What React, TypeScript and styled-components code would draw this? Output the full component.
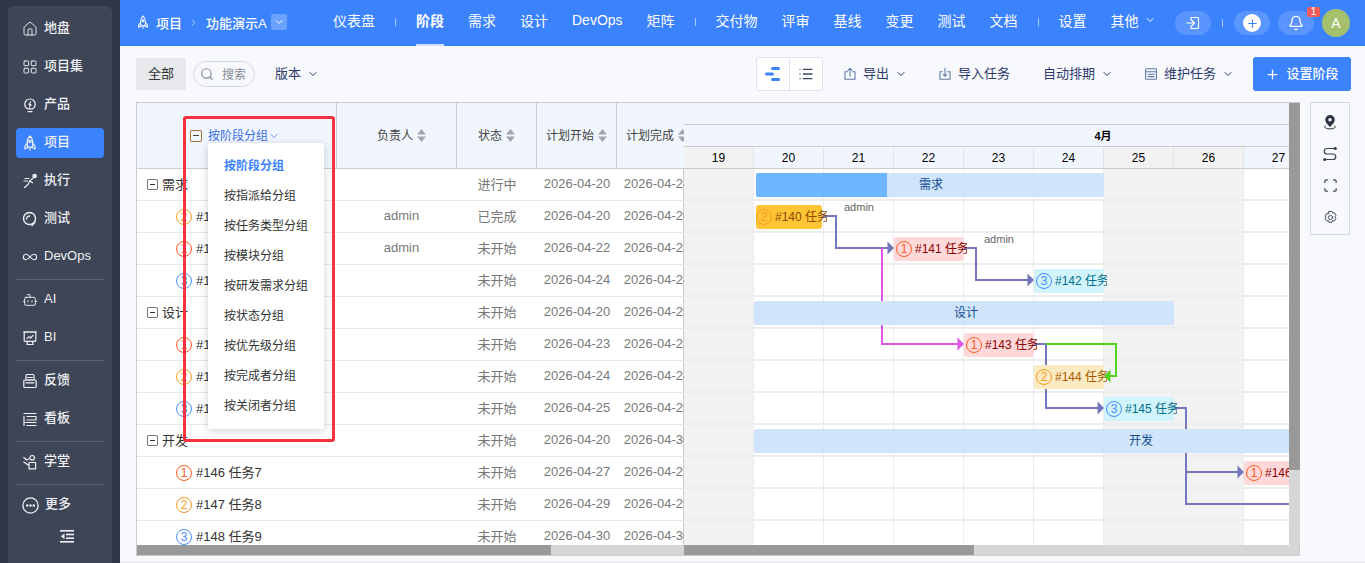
import React from "react";
import styled, { createGlobalStyle } from "styled-components";
import {
  House, LayoutGrid, Bot,
  ChevronDown, ChevronRight, Search, Infinity as InfinityIcon, Plus, Bell, List, Scan,
} from "lucide-react";

const Global = createGlobalStyle`
  html, body { margin: 0; padding: 0; height: 100%; overflow: hidden; }
  body { font-family: "Liberation Sans", "Noto Sans CJK SC", sans-serif; font-size: 12px; color: #333; }
  * { box-sizing: border-box; }
`;

const Page = styled.div`
  display: flex;
  width: 1365px;
  height: 563px;
  background: #f7f9fc;
  overflow: hidden;
`;

const Sidebar = styled.aside`
  width: 120px;
  flex: none;
  background: #2e3849;
  padding: 6px 8px 0;
  display: flex;
`;
const SidePanel = styled.nav`
  flex: 1;
  background: #3e4556;
  border-radius: 6px 6px 0 0;
  padding: 8px 8px 0;
  display: flex;
  flex-direction: column;
`;
const SideItem = styled.div<{ $active?: boolean }>`
  height: 30px;
  margin-bottom: 8px;
  flex: none;
  display: flex;
  align-items: center;
  gap: 6px;
  padding-left: 6px;
  border-radius: 4px;
  font-size: 13px;
  font-weight: 500;
  color: #eef0f4;
  background: ${(p) => (p.$active ? "#3b82fd" : "transparent")};
`;
const SideLabel = styled.span`
  margin-bottom: 2px;
  line-height: 18px;
`;
const SideRule = styled.div`
  height: 1px;
  background: #5a6070;
  margin: -1px 0 5px;
  flex: none;
`;
const Collapse = styled.div`
  display: flex;
  justify-content: center;
  padding: 2px 0 0 14px;
  color: #eef0f4;
`;

const Main = styled.div`
  flex: 1;
  min-width: 0;
  display: flex;
  flex-direction: column;
`;
const TopBar = styled.header`
  height: 46px;
  flex: none;
  background: #3b82fd;
  color: #fff;
  display: flex;
  align-items: center;
  padding: 0 15px 0 16px;
`;
const Crumb = styled.div`
  display: flex;
  align-items: center;
  font-size: 13px;
  font-weight: 500;
  width: 151px;
  flex: none;
  padding-bottom: 2px;
`;
const CrumbText = styled.span<{ $left?: number }>`
  margin-left: ${(p) => p.$left ?? 0}px;
  white-space: nowrap;
`;
const CrumbArrow = styled.span`
  display: flex;
  margin: 0 7px 0 6px;
  opacity: 0.7;
`;
const CrumbPick = styled.span`
  width: 16px;
  height: 16px;
  margin-left: 4px;
  border-radius: 2px;
  background: #6ba2fd;
  display: flex;
  align-items: center;
  justify-content: center;
`;
const Nav = styled.div`
  margin-left: 46px;
  display: flex;
  align-items: center;
  gap: 24px;
  height: 46px;
`;
const NavItem = styled.div<{ $on?: boolean }>`
  height: 46px;
  display: flex;
  align-items: center;
  gap: 5px;
  font-size: 14px;
  font-weight: ${(p) => (p.$on ? 700 : 400)};
  border-bottom: 2px solid ${(p) => (p.$on ? "#cfe0ff" : "transparent")};
  padding-bottom: 4px;
  white-space: nowrap;
`;
const NavSep = styled.i`
  width: 1px;
  height: 8px;
  margin: 0 -4px 2px;
  background: #a9c8fe;
`;
const TopRight = styled.div`
  margin-left: auto;
  display: flex;
  align-items: center;
  gap: 8px;
  position: relative;
`;
const Pill = styled.div`
  width: 36px;
  height: 24px;
  border-radius: 12px;
  background: #5a95fd;
  display: flex;
  align-items: center;
  justify-content: center;
`;
const PlusDisc = styled.span`
  width: 18px;
  height: 18px;
  border-radius: 50%;
  background: #fff;
  color: #3b82fd;
  display: flex;
  align-items: center;
  justify-content: center;
`;
const Avatar = styled.div`
  width: 28px;
  height: 28px;
  border-radius: 50%;
  background: #a5c06d;
  font-size: 14px;
  display: flex;
  align-items: center;
  justify-content: center;
`;
const BellBox = styled.div`
  position: relative;
`;
const Badge = styled.span`
  position: absolute;
  top: -4px;
  right: -6px;
  width: 13px;
  height: 10px;
  border-radius: 2px;
  background: #f25a5a;
  font-size: 10px;
  line-height: 10px;
  text-align: center;
`;
const TopSep = styled.i`
  width: 1px;
  height: 8px;
  background: #a9c8fe;
  margin: 0 3px;
`;

const Body = styled.div`
  flex: 1;
  min-height: 0;
  padding: 0 15px 5px 16px;
  display: flex;
  flex-direction: column;
  border-bottom: 2px solid #ecedf1;
`;
const Toolbar = styled.div`
  height: 56px;
  flex: none;
  display: flex;
  align-items: center;
  margin-right: -1px;
  color: #2e3a6e;
`;
const AllTab = styled.div`
  width: 50px;
  height: 32px;
  background: #e6e8ec;
  border-radius: 2px;
  color: #333;
  font-size: 13px;
  padding-bottom: 4px;
  display: flex;
  align-items: center;
  justify-content: center;
`;
const SearchBox = styled.div`
  margin-left: 7px;
  width: 62px;
  height: 26px;
  border: 1px solid #d5d8e6;
  border-radius: 13px;
  display: flex;
  align-items: center;
  gap: 8px;
  padding-left: 6px;
  color: #888c99;
`;
const SearchLabel = styled.span`
  margin-bottom: 2px;
`;
const ToolText = styled.div<{ $left?: number }>`
  display: flex;
  align-items: center;
  gap: 6px;
  margin-left: ${(p) => p.$left ?? 0}px;
  font-size: 13px;
  white-space: nowrap;
`;
const ToolLabel = styled.span`
  margin-bottom: 4px;
`;
const ToolIcon = styled.span`
  display: flex;
  color: #5c7aa8;
`;
const Spring = styled.div`
  flex: 1;
`;
const ViewSwitch = styled.div`
  width: 67px;
  height: 34px;
  display: flex;
  border: 1px solid #dfe3ef;
  border-radius: 3px;
  background: #fff;
`;
const ViewCell = styled.div<{ $line?: boolean }>`
  flex: 1;
  display: flex;
  align-items: center;
  justify-content: center;
  border-left: ${(p) => (p.$line ? "1px solid #dfe3ef" : "none")};
  color: #3d4a66;
`;
const PrimaryBtn = styled.div`
  margin-left: 19px;
  width: 98px;
  height: 34px;
  border-radius: 3px;
  background: #3b82fd;
  color: #fff;
  display: flex;
  align-items: center;
  justify-content: center;
  gap: 6px;
  font-size: 13px;
  font-weight: 500;
`;

const Workspace = styled.div`
  display: flex;
  gap: 10px;
  height: 454px;
  flex: none;
`;
const Frame = styled.div`
  width: 1164px;
  height: 454px;
  border: 1px solid #ccc;
  display: flex;
  background: #fff;
`;
const LeftPane = styled.div`
  width: 547px;
  flex: none;
  position: relative;
  display: flex;
  flex-direction: column;
`;
const LeftClip = styled.div`
  flex: 1;
  min-height: 0;
  overflow: hidden;
`;
const HeadRow = styled.div`
  display: flex;
  height: 66px;
  background: #f1f6fe;
  border-bottom: 1px solid #ccc;
`;
const HeadCell = styled.div<{ $w: number; $pad?: number; $start?: boolean }>`
  width: ${(p) => p.$w}px;
  flex: none;
  display: flex;
  align-items: center;
  justify-content: ${(p) => (p.$start ? "flex-start" : "center")};
  gap: 4px;
  padding-left: ${(p) => p.$pad ?? 0}px;
  padding-bottom: 1px;
  border-right: 1px solid #ccc;
  color: #444;
  white-space: nowrap;
  overflow: hidden;
`;
const HeadLabel = styled.span`
  margin-bottom: 2px;
`;
const HeadName = styled.div`
  width: 200px;
  flex: none;
  display: flex;
  align-items: center;
  padding: 0 0 0 53px;
  border-right: 1px solid #ccc;
  color: #3b6fe0;
  gap: 6px;
`;
const HeadGroup = styled.span`
  display: flex;
  align-items: center;
  gap: 0;
`;
const HeadToggle = styled.span`
  width: 12px;
  height: 12px;
  border: 1px solid #a8763a;
  border-radius: 1px;
  display: flex;
  align-items: center;
  justify-content: center;
  &::before { content: ""; width: 6px; height: 1px; background: #444; }
`;
const Row = styled.div`
  display: flex;
  height: 32px;
  border-bottom: 1px solid #e8e8e8;
  flex: none;
  font-size: 13px;
`;
const NameCell = styled.div<{ $group?: boolean }>`
  width: 200px;
  flex: none;
  display: flex;
  align-items: center;
  gap: 4px;
  padding-left: ${(p) => (p.$group ? 10 : 39)}px;
  color: #333;
  white-space: nowrap;
`;
const NameText = styled.span`
  margin-bottom: 2px;
`;
const GroupToggle = styled.span`
  width: 11px;
  height: 11px;
  flex: none;
  border: 1px solid #777;
  border-radius: 1px;
  display: flex;
  align-items: center;
  justify-content: center;
  &::before { content: ""; width: 5px; height: 1px; background: #333; }
`;
const Cell = styled.div<{ $w: number; $pad?: number }>`
  width: ${(p) => p.$w}px;
  flex: none;
  display: flex;
  align-items: center;
  justify-content: center;
  padding-left: ${(p) => p.$pad ?? 0}px;
  padding-bottom: 2px;
  color: #777;
  white-space: nowrap;
`;
const Level = styled.span<{ $c: string }>`
  width: 16px;
  height: 16px;
  flex: none;
  border-radius: 50%;
  border: 1px solid ${(p) => p.$c};
  color: ${(p) => p.$c};
  font-size: 12px;
  line-height: 14px;
  text-align: center;
`;
const HScroll = styled.div`
  height: 10px;
  flex: none;
  background: #d6d6d6;
`;
const HThumb = styled.div<{ $w: number }>`
  width: ${(p) => p.$w}px;
  height: 100%;
  background: #999;
`;
const Menu = styled.div`
  position: absolute;
  left: 71px;
  top: 40px;
  width: 116px;
  height: 286px;
  padding: 7px 0;
  background: #fff;
  border-radius: 2px;
  box-shadow: 0 2px 10px rgba(0, 0, 0, 0.18);
  z-index: 2;
`;
const MenuItem = styled.div<{ $on?: boolean }>`
  height: 30px;
  display: flex;
  align-items: center;
  padding: 0 0 2px 16px;
  font-size: 12px;
  font-weight: ${(p) => (p.$on ? 700 : 400)};
  color: ${(p) => (p.$on ? "#3b82fd" : "#333")};
  white-space: nowrap;
`;
const RedBox = styled.div`
  position: absolute;
  left: 46px;
  top: 13px;
  width: 152px;
  height: 326px;
  border: 3px solid #f5333f;
  border-radius: 3px;
  z-index: 3;
`;

const RightPane = styled.div`
  flex: 1;
  min-width: 0;
  border-left: 1px solid #ccc;
  margin-left: -1px;
  display: flex;
  flex-direction: column;
`;
const RightTop = styled.div`
  flex: 1;
  min-height: 0;
  display: flex;
`;
const Timeline = styled.div`
  width: 605px;
  flex: none;
  display: flex;
  flex-direction: column;
  overflow: hidden;
`;
const YearBand = styled.div`
  height: 22px;
  flex: none;
  background: #f1f6fe;
  border-bottom: 1px solid #ccc;
`;
const MonthBand = styled.div`
  height: 22px;
  flex: none;
  width: 838px;
  background: #f1f6fe;
  border-bottom: 1px solid #ccc;
  display: flex;
  align-items: center;
  justify-content: center;
  padding-bottom: 1px;
  font-weight: 700;
  color: #000;
  font-size: 11px;
`;
const DayBand = styled.div`
  height: 22px;
  flex: none;
  display: flex;
  border-bottom: 1px solid #ccc;
`;
const DayCell = styled.div<{ $off?: boolean }>`
  width: 70px;
  flex: none;
  display: flex;
  align-items: center;
  justify-content: center;
  font-size: 12px;
  color: #000;
  background: ${(p) => (p.$off ? "#f2f2f2" : "#f1f6fe")};
  border-right: 1px solid #e4e4e4;
`;
const Canvas = styled.div`
  position: relative;
  flex: 1;
  min-height: 0;
  overflow: hidden;
`;
const ColumnLayer = styled.div`
  position: absolute;
  inset: 0;
  display: flex;
`;
const Column = styled.div<{ $off?: boolean }>`
  width: 70px;
  flex: none;
  border-right: 1px solid #ececec;
  background: ${(p) => (p.$off ? "#f2f2f2" : "#fff")};
`;
const RowLayer = styled.div`
  position: absolute;
  inset: 0;
  display: flex;
  flex-direction: column;
`;
const RowLine = styled.div`
  height: 32px;
  flex: none;
  border-bottom: 2px solid #ececec;
`;
const Links = styled.svg`
  position: absolute;
  left: 0;
  top: 0;
`;
const GroupBar = styled.div<{ $x: number; $y: number; $w: number; $labelLeft?: number }>`
  position: absolute;
  left: ${(p) => p.$x}px;
  top: ${(p) => p.$y}px;
  width: ${(p) => p.$w}px;
  height: 24px;
  background: #d0e5fb;
  border-radius: 2px;
  display: flex;
  align-items: center;
  justify-content: ${(p) => (p.$labelLeft ? "flex-start" : "center")};
  padding-left: ${(p) => p.$labelLeft ?? 0}px;
  font-size: 12px;
  color: #0f4c92;
  overflow: hidden;
`;
const GroupProgress = styled.div<{ $w: number }>`
  position: absolute;
  left: 0;
  top: 0;
  bottom: 0;
  width: ${(p) => p.$w}px;
  background: #6eb6ff;
`;
const GroupLabel = styled.span<{ $shift?: number }>`
  position: relative;
  margin-bottom: 3px;
  margin-left: ${(p) => p.$shift ?? 0}px;
`;
const TaskBar = styled.div<{ $x: number; $y: number; $w: number; $bg: string; $fg: string }>`
  position: absolute;
  left: ${(p) => p.$x}px;
  top: ${(p) => p.$y}px;
  width: ${(p) => p.$w}px;
  height: 24px;
  background: ${(p) => p.$bg};
  color: ${(p) => p.$fg};
  border-radius: 3px;
  font-size: 12px;
`;
const TaskInner = styled.div<{ $pad: number }>`
  width: ${(p) => p.$pad + 71}px;
  height: 24px;
  overflow: hidden;
  white-space: nowrap;
  display: flex;
  align-items: center;
  gap: 3px;
  padding-left: ${(p) => p.$pad}px;
`;
const TaskText = styled.span`
  margin-bottom: 3px;
`;
const OwnerTag = styled.span<{ $x: number; $y: number }>`
  position: absolute;
  left: ${(p) => p.$x}px;
  top: ${(p) => p.$y}px;
  font-size: 11px;
  line-height: 12px;
  color: #666;
`;
const VScroll = styled.div`
  width: 11px;
  flex: none;
  background: #d6d6d6;
`;
const VThumb = styled.div`
  height: 367px;
  background: #999;
`;
const ToolRail = styled.div`
  width: 40px;
  height: 133px;
  border: 1px solid #d5d8e6;
  flex: none;
  display: flex;
  flex-direction: column;
  align-items: center;
  padding-top: 11px;
  color: #3d4455;
`;
const RailSlot = styled.div`
  height: 32px;
  width: 100%;
  flex: none;
  display: flex;
  justify-content: center;
`;

const C = { 1: "#ff5a1f", 2: "#fa9a1e", 3: "#4a8dff" } as const;
const DAYS = [19, 20, 21, 22, 23, 24, 25, 26, 27];
const OFF = [19, 25, 26];

type RowT = { name: string; group?: boolean; lv?: 1 | 2 | 3; owner?: string; st: string; s: string; e: string };
const ROWS: RowT[] = [
  { name: "需求", group: true, st: "进行中", s: "2026-04-20", e: "2026-04-24" },
  { name: "#140 任务1", lv: 2, owner: "admin", st: "已完成", s: "2026-04-20", e: "2026-04-20" },
  { name: "#141 任务2", lv: 1, owner: "admin", st: "未开始", s: "2026-04-22", e: "2026-04-22" },
  { name: "#142 任务3", lv: 3, st: "未开始", s: "2026-04-24", e: "2026-04-24" },
  { name: "设计", group: true, st: "未开始", s: "2026-04-20", e: "2026-04-25" },
  { name: "#143 任务4", lv: 1, st: "未开始", s: "2026-04-23", e: "2026-04-23" },
  { name: "#144 任务5", lv: 2, st: "未开始", s: "2026-04-24", e: "2026-04-24" },
  { name: "#145 任务6", lv: 3, st: "未开始", s: "2026-04-25", e: "2026-04-25" },
  { name: "开发", group: true, st: "未开始", s: "2026-04-20", e: "2026-04-30" },
  { name: "#146 任务7", lv: 1, st: "未开始", s: "2026-04-27", e: "2026-04-27" },
  { name: "#147 任务8", lv: 2, st: "未开始", s: "2026-04-29", e: "2026-04-29" },
  { name: "#148 任务9", lv: 3, st: "未开始", s: "2026-04-30", e: "2026-04-30" },
];
const MENU = ["按阶段分组", "按指派给分组", "按任务类型分组", "按模块分组", "按研发需求分组", "按状态分组", "按优先级分组", "按完成者分组", "按关闭者分组"];

const TASKS = [
  { n: "#140 任务1", lv: 2 as const, x: 72, y: 36, w: 66, pad: 0, bg: "#ffc535", fg: "#8a4b00" },
  { n: "#141 任务2", lv: 1 as const, x: 210, y: 68, w: 70, pad: 2, bg: "#ffd9d9", fg: "#8b0000" },
  { n: "#142 任务3", lv: 3 as const, x: 350, y: 100, w: 70, pad: 2, bg: "#d0f3fc", fg: "#00708a" },
  { n: "#143 任务4", lv: 1 as const, x: 280, y: 164, w: 70, pad: 2, bg: "#ffd9d9", fg: "#8b0000" },
  { n: "#144 任务5", lv: 2 as const, x: 350, y: 196, w: 70, pad: 2, bg: "#fcebc2", fg: "#a85800" },
  { n: "#145 任务6", lv: 3 as const, x: 420, y: 228, w: 70, pad: 2, bg: "#d0f3fc", fg: "#00708a" },
  { n: "#146 任务7", lv: 1 as const, x: 560, y: 292, w: 70, pad: 2, bg: "#ffd9d9", fg: "#8b0000" },
];

const Ico = ({ s = 16, sw = 1.2, children }: { s?: number; sw?: number; children: React.ReactNode }) => (
  <svg width={s} height={s} viewBox="0 0 16 16" fill="none" stroke="currentColor" strokeWidth={sw} strokeLinejoin="round" strokeLinecap="round" style={{ flex: "none" }}>
    {children}
  </svg>
);

const SortIcon = () => (
  <svg width="9" height="13" viewBox="0 0 9 13" fill="#a2a6b2" style={{ flex: "none" }}>
    <path d="M4.5 0 9 5.5H0z" />
    <path d="M4.5 13 9 7.5H0z" />
  </svg>
);
const Arrow = ({ x, y, c, left }: { x: number; y: number; c: string; left?: boolean }) => (
  <path d={left ? `M${x} ${y}l6.5 -6.5v13z` : `M${x} ${y}l-6.5 -6.5v13z`} fill={c} stroke="none" />
);
const RocketUp = ({ s = 16 }: { s?: number }) => (
  <Ico s={s}>
    <path d="M8 1C5.8 3 5.2 5.5 5.2 8c0 1.6.3 3 .6 4.2h4.4c.3-1.2.6-2.6.6-4.2 0-2.5-.6-5-2.8-7z" />
    <path d="M5.3 8.5 3 11.2V14l3-1.8M10.7 8.5 13 11.2V14l-3-1.8M8 13v2" />
    <circle cx="8" cy="6.5" r="1.1" />
  </Ico>
);
const BulbIcon = () => (
  <Ico>
    <path d="M5.6 11.8C3.8 10.9 2.8 9.2 2.8 7.2a5.2 5.2 0 0 1 10.4 0c0 2-1 3.7-2.8 4.6z" />
    <path d="M6 14.6h4M8.6 5 7 7.6h2L7.4 10" />
  </Ico>
);
const RunIcon = () => (
  <Ico>
    <circle cx="12.6" cy="3" r="1.7" fill="currentColor" />
    <path d="M2.5 14.5 6.5 11l1.2-3 3.2-2.7M7.7 8l2.8 1.8M3 5.5h4M2 8h3.5" />
  </Ico>
);
const TestIcon = () => (
  <Ico sw={1.4}>
    <circle cx="7.5" cy="7.5" r="6" />
    <path d="M10 14.5 13 11M4.5 8a3 3 0 0 1 3-3" />
  </Ico>
);
const ScreenIcon = () => (
  <Ico>
    <rect x="2.2" y="2" width="11.6" height="9.4" rx="0.8" />
    <path d="M1.5 2h13M5 8.6l2-2 1.6 1.4L11 5.4M5.5 11.4 5 14.5h6l-.5-3.1" />
  </Ico>
);
const FeedbackIcon = () => (
  <Ico>
    <path d="M4 7V2.5A1 1 0 0 1 5 1.5h6a1 1 0 0 1 1 1V7" />
    <path d="M5.6 4.5h4.8M5.6 7h4.8" />
    <rect x="1.8" y="7" width="12.4" height="7.5" rx="1" />
    <path d="M4 9.8h8" />
  </Ico>
);
const BoardIcon = () => (
  <Ico>
    <path d="M2 2.5h12M5 5.5h9v3.5H5M2 5.5V14.5M2 11.5h12M5 14.5h9" />
  </Ico>
);
const StudyIcon = () => (
  <Ico>
    <circle cx="10.2" cy="3.8" r="2.3" />
    <path d="M7 14.8V8.5h6.6v6.3zM1.8 3.5 4.6 6l2-1M1.8 8 7 11.5M9 14.8h2" />
  </Ico>
);
const MoreIcon = () => (
  <svg width="17" height="17" viewBox="0 0 17 17" style={{ flex: "none" }}>
    <circle cx="8.5" cy="8.5" r="7.6" fill="none" stroke="currentColor" strokeWidth="1.3" />
    <circle cx="5.2" cy="8.5" r="1.2" fill="currentColor" />
    <circle cx="8.5" cy="8.5" r="1.2" fill="currentColor" />
    <circle cx="11.8" cy="8.5" r="1.2" fill="currentColor" />
  </svg>
);
const CollapseIcon = () => (
  <svg width="14" height="13" viewBox="0 0 14 13" fill="currentColor" style={{ flex: "none" }}>
    <rect x="0" y="0" width="14" height="1.6" />
    <rect x="6" y="3.7" width="8" height="1.6" />
    <rect x="6" y="7.4" width="8" height="1.6" />
    <rect x="0" y="11" width="14" height="1.6" />
    <path d="M4.5 3.4v5.8L0.8 6.3z" />
  </svg>
);
const GanttIcon = () => (
  <svg width="16" height="14" viewBox="0 0 16 14" fill="#3b82fd">
    <rect x="6" y="0" width="9" height="3" rx="1.5" />
    <rect x="0" y="5.5" width="9" height="3" rx="1.5" />
    <rect x="6" y="11" width="9" height="3" rx="1.5" />
  </svg>
);
const RouteIcon = () => (
  <Ico sw={1.2}>
    <path d="M13 2.5H5a2.7 2.7 0 0 0 0 5.5h6a2.7 2.7 0 0 1 0 5.5H3" />
    <circle cx="13.3" cy="2.5" r="1" fill="currentColor" />
    <circle cx="2.7" cy="13.5" r="1" fill="currentColor" />
  </Ico>
);
const PinIcon = () => (
  <svg width="16" height="16" viewBox="0 0 16 16" style={{ flex: "none" }}>
    <path d="M8 1a4.8 4.8 0 0 0-4.8 4.8C3.2 9 8 13 8 13s4.8-4 4.8-7.2A4.8 4.8 0 0 0 8 1z" fill="#2e3446" />
    <circle cx="8" cy="5.8" r="1.7" fill="#f7f9fc" />
    <path d="M3.5 11.5C2.6 12 2.5 13.2 3.5 14c1.800 1.200 7.200 1.200 9 0 1-.8.900-2 0-2.500" fill="none" stroke="#2e3446" strokeWidth="1" />
  </svg>
);
const GearIcon = () => (
  <Ico s={15} sw={1}>
    <circle cx="8" cy="8" r="2.2" />
    <path d="M6.4 1.5h3.2l.7 1.8 1.900-.3 1.600 2.800-1.200 1.500 1.200 1.500-1.600 2.800-1.900-.3-.7 1.800H6.400l-.7-1.800-1.900.3-1.600-2.800L3.400 8 2.200 6.500 3.800 3.700l1.900.3z" />
  </Ico>
);
const EnterIcon = () => (
  <Ico>
    <path d="M6 2.500h6.500a1 1 0 0 1 1 1v9a1 1 0 0 1-1 1H6M6 5V2.500M6 13.500V11M1.800 8h7.500M7 5.500 9.500 8 7 10.500" />
  </Ico>
);
const ExportIcon = () => (
  <Ico s={14}>
    <path d="M5 5.500H2.200v8.500h11.600V5.500H11M8 10.500V1.500M5.500 4 8 1.500 10.500 4" />
  </Ico>
);
const ImportIcon = () => (
  <Ico s={14}>
    <path d="M5 5.500H2.200v8.500h11.600V5.500H11M8 1.500V10.500M6 8.500l2 2 2-2" />
  </Ico>
);
const SheetIcon = () => (
  <Ico s={14}>
    <rect x="1.8" y="2" width="12.4" height="12" rx="1" />
    <path d="M1.8 5.500h12.400M4.500 8.200h7M4.500 11h7" />
  </Ico>
);

export default function App() {
  return (
    <>
      <Global />
      <Page>
        <Sidebar>
          <SidePanel>
            <SideItem><House size={16} strokeWidth={1.4} /><SideLabel>地盘</SideLabel></SideItem>
            <SideItem><LayoutGrid size={16} strokeWidth={1.4} /><SideLabel>项目集</SideLabel></SideItem>
            <SideItem><BulbIcon /><SideLabel>产品</SideLabel></SideItem>
            <SideItem $active><RocketUp /><SideLabel>项目</SideLabel></SideItem>
            <SideItem><RunIcon /><SideLabel>执行</SideLabel></SideItem>
            <SideItem><TestIcon /><SideLabel>测试</SideLabel></SideItem>
            <SideItem><InfinityIcon size={16} strokeWidth={1.6} /><SideLabel>DevOps</SideLabel></SideItem>
            <SideRule />
            <SideItem><Bot size={16} strokeWidth={1.4} /><SideLabel>AI</SideLabel></SideItem>
            <SideItem><ScreenIcon /><SideLabel>BI</SideLabel></SideItem>
            <SideRule />
            <SideItem><FeedbackIcon /><SideLabel>反馈</SideLabel></SideItem>
            <SideItem><BoardIcon /><SideLabel>看板</SideLabel></SideItem>
            <SideRule />
            <SideItem><StudyIcon /><SideLabel>学堂</SideLabel></SideItem>
            <SideRule />
            <SideItem><MoreIcon /><SideLabel>更多</SideLabel></SideItem>
            <Collapse><CollapseIcon /></Collapse>
          </SidePanel>
        </Sidebar>
        <Main>
          <TopBar>
            <Crumb>
              <RocketUp s={14} />
              <CrumbText $left={6}>项目</CrumbText>
              <CrumbArrow><ChevronRight size={11} /></CrumbArrow>
              <CrumbText>功能演示A</CrumbText>
              <CrumbPick><ChevronDown size={12} /></CrumbPick>
            </Crumb>
            <Nav>
              <NavItem>仪表盘</NavItem>
              <NavSep />
              <NavItem $on>阶段</NavItem>
              <NavItem>需求</NavItem>
              <NavItem>设计</NavItem>
              <NavItem>DevOps</NavItem>
              <NavItem>矩阵</NavItem>
              <NavSep />
              <NavItem>交付物</NavItem>
              <NavItem>评审</NavItem>
              <NavItem>基线</NavItem>
              <NavItem>变更</NavItem>
              <NavItem>测试</NavItem>
              <NavItem>文档</NavItem>
              <NavSep />
              <NavItem>设置</NavItem>
              <NavItem>其他<ChevronDown size={12} /></NavItem>
            </Nav>
            <TopRight>
              <Pill><EnterIcon /></Pill>
              <TopSep />
              <Pill><PlusDisc><Plus size={13} /></PlusDisc></Pill>
              <BellBox>
                <Pill><Bell size={16} /></Pill>
                <Badge>1</Badge>
              </BellBox>
              <Avatar>A</Avatar>
            </TopRight>
          </TopBar>
          <Body>
            <Toolbar>
              <AllTab>全部</AllTab>
              <SearchBox><Search size={14} /><SearchLabel>搜索</SearchLabel></SearchBox>
              <ToolText $left={20}><ToolLabel>版本</ToolLabel><ChevronDown size={12} /></ToolText>
              <Spring />
              <ViewSwitch>
                <ViewCell><GanttIcon /></ViewCell>
                <ViewCell $line><List size={16} /></ViewCell>
              </ViewSwitch>
              <ToolText $left={20}><ToolIcon><ExportIcon /></ToolIcon><ToolLabel>导出</ToolLabel><ChevronDown size={12} /></ToolText>
              <ToolText $left={31}><ToolIcon><ImportIcon /></ToolIcon><ToolLabel>导入任务</ToolLabel></ToolText>
              <ToolText $left={33}><ToolLabel>自动排期</ToolLabel><ChevronDown size={12} /></ToolText>
              <ToolText $left={31}><ToolIcon><SheetIcon /></ToolIcon><ToolLabel>维护任务</ToolLabel><ChevronDown size={12} /></ToolText>
              <PrimaryBtn><Plus size={15} /><ToolLabel>设置阶段</ToolLabel></PrimaryBtn>
            </Toolbar>
            <Workspace>
              <Frame>
                <LeftPane>
                  <LeftClip>
                    <HeadRow>
                      <HeadName><HeadToggle /><HeadGroup><HeadLabel>按阶段分组</HeadLabel><ChevronDown size={12} strokeWidth={1.5} /></HeadGroup></HeadName>
                      <HeadCell $w={120} $pad={10}><HeadLabel>负责人</HeadLabel><SortIcon /></HeadCell>
                      <HeadCell $w={80}><HeadLabel>状态</HeadLabel><SortIcon /></HeadCell>
                      <HeadCell $w={80}><HeadLabel>计划开始</HeadLabel><SortIcon /></HeadCell>
                      <HeadCell $w={80} $pad={9} $start><HeadLabel>计划完成</HeadLabel><SortIcon /></HeadCell>
                    </HeadRow>
                    {ROWS.map((r) => (
                      <Row key={r.name}>
                        <NameCell $group={r.group}>
                          {r.group ? <GroupToggle /> : <Level $c={C[r.lv!]}>{r.lv}</Level>}
                          <NameText>{r.name}</NameText>
                        </NameCell>
                        <Cell $w={120} $pad={9}>{r.owner}</Cell>
                        <Cell $w={80}>{r.st}</Cell>
                        <Cell $w={80}>{r.s}</Cell>
                        <Cell $w={80}>{r.e}</Cell>
                      </Row>
                    ))}
                  </LeftClip>
                  <HScroll><HThumb $w={414} /></HScroll>
                  <Menu>
                    {MENU.map((m, i) => (
                      <MenuItem key={m} $on={i === 0}>{m}</MenuItem>
                    ))}
                  </Menu>
                  <RedBox />
                </LeftPane>
                <RightPane>
                  <RightTop>
                    <Timeline>
                      <YearBand />
                      <MonthBand>4月</MonthBand>
                      <DayBand>
                        {DAYS.map((d) => (
                          <DayCell key={d} $off={OFF.includes(d)}>{d}</DayCell>
                        ))}
                      </DayBand>
                      <Canvas>
                        <ColumnLayer>
                          {DAYS.map((d) => (
                            <Column key={d} $off={OFF.includes(d)} />
                          ))}
                        </ColumnLayer>
                        <RowLayer>
                          {ROWS.map((r) => (
                            <RowLine key={r.name} />
                          ))}
                        </RowLayer>
                        <Links width="605" height="376" viewBox="684 169 605 376" fill="none" strokeWidth="2">
                          <path d="M823 216H836V248H889" stroke="#7676bc" />
                          <Arrow x={894} y={248} c="#7676bc" />
                          <path d="M882 248V344H959" stroke="#de57e7" />
                          <Arrow x={964} y={344} c="#de57e7" />
                          <path d="M964 248H976V280H1029" stroke="#7676bc" />
                          <Arrow x={1034} y={280} c="#7676bc" />
                          <path d="M1034 344H1046V408H1099" stroke="#7676bc" />
                          <Arrow x={1104} y={408} c="#7676bc" />
                          <path d="M1174 408H1186V504H1289M1186 472H1239" stroke="#7676bc" />
                          <Arrow x={1244} y={472} c="#7676bc" />
                        </Links>
                        <GroupBar $x={72} $y={4} $w={348}>
                          <GroupProgress $w={131} />
                          <GroupLabel $shift={2}>需求</GroupLabel>
                        </GroupBar>
                        <GroupBar $x={70} $y={132} $w={420}><GroupLabel $shift={4}>设计</GroupLabel></GroupBar>
                        <GroupBar $x={70} $y={260} $w={780} $labelLeft={375}><GroupLabel>开发</GroupLabel></GroupBar>
                        {TASKS.map((t) => (
                          <TaskBar key={t.n} $x={t.x} $y={t.y} $w={t.w} $bg={t.bg} $fg={t.fg}>
                            <TaskInner $pad={t.pad}>
                              <Level $c={C[t.lv]}>{t.lv}</Level>
                              <TaskText>{t.n}</TaskText>
                            </TaskInner>
                          </TaskBar>
                        ))}
                        <OwnerTag $x={160} $y={32}>admin</OwnerTag>
                        <OwnerTag $x={300} $y={64}>admin</OwnerTag>
                        <Links width="605" height="376" viewBox="684 169 605 376" fill="none" strokeWidth="2">
                          <path d="M1046 344H1116V376H1110" stroke="#52d41c" />
                          <Arrow x={1104} y={376} c="#52d41c" left />
                        </Links>
                      </Canvas>
                    </Timeline>
                    <VScroll><VThumb /></VScroll>
                  </RightTop>
                  <HScroll><HThumb $w={290} /></HScroll>
                </RightPane>
              </Frame>
              <ToolRail>
                <RailSlot><PinIcon /></RailSlot>
                <RailSlot><RouteIcon /></RailSlot>
                <RailSlot><Scan size={15} strokeWidth={2} /></RailSlot>
                <RailSlot><GearIcon /></RailSlot>
              </ToolRail>
            </Workspace>
          </Body>
        </Main>
      </Page>
    </>
  );
}
